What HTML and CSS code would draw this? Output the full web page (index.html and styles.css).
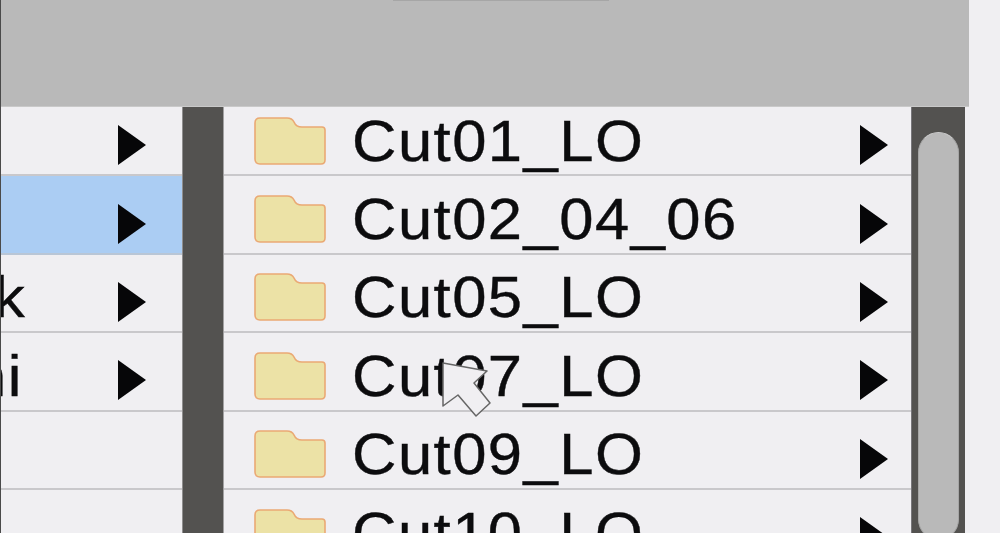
FILE: index.html
```html
<!DOCTYPE html>
<html lang="en">
<head>
<meta charset="utf-8">
<title>Folder browser</title>
<link rel="stylesheet" href="styles.css">
</head>
<body>
<svg width="0" height="0" class="defs" aria-hidden="true">
  <symbol id="folder" viewBox="0 0 72 48">
    <path d="M1 6 Q1 1 6 1 H33 Q38 1 40 5 Q42 10 48 10 H68 Q71 10 71 13 V43 Q71 47 67 47 H6 Q1 47 1 42 Z" fill="#ece2a6" stroke="#eaa974" stroke-width="1.6"/>
  </symbol>
  <symbol id="arrow" viewBox="0 0 30 42">
    <path d="M1 1 L29 21 L1 41 Z" fill="#060608"/>
  </symbol>
</svg>
<div class="app">
  <header class="top"><span class="handle"></span></header>
  <main class="panes">
    <section class="list left">
      <div class="row"><svg class="arrow"><use href="#arrow"/></svg></div>
      <div class="row active"><svg class="arrow"><use href="#arrow"/></svg></div>
      <div class="row"><span class="name clip-k">k</span><svg class="arrow"><use href="#arrow"/></svg></div>
      <div class="row"><span class="name clip-hi">hi</span><svg class="arrow"><use href="#arrow"/></svg></div>
      <div class="row"></div>
      <div class="row"></div>
    </section>
    <div class="gutter"></div>
    <section class="list right">
      <div class="row"><svg class="folder"><use href="#folder"/></svg><span class="name">Cut01_LO</span><svg class="arrow"><use href="#arrow"/></svg></div>
      <div class="row"><svg class="folder"><use href="#folder"/></svg><span class="name">Cut02_04_06</span><svg class="arrow"><use href="#arrow"/></svg></div>
      <div class="row"><svg class="folder"><use href="#folder"/></svg><span class="name">Cut05_LO</span><svg class="arrow"><use href="#arrow"/></svg></div>
      <div class="row"><svg class="folder"><use href="#folder"/></svg><span class="name">Cut07_LO</span><svg class="arrow"><use href="#arrow"/></svg></div>
      <div class="row"><svg class="folder"><use href="#folder"/></svg><span class="name">Cut09_LO</span><svg class="arrow"><use href="#arrow"/></svg></div>
      <div class="row"><svg class="folder"><use href="#folder"/></svg><span class="name">Cut10_LO</span><svg class="arrow"><use href="#arrow"/></svg></div>
    </section>
    <div class="scrollbar"><div class="thumb"></div></div>
  </main>
  <svg class="cursor" viewBox="0 0 50 56" aria-hidden="true">
    <path d="M2 2 L46 10 L33 22 L49 42 L35 55 L17 34 L2 45 Z" fill="#f0eff2" stroke="#666" stroke-width="1.5" stroke-linejoin="round"/>
  </svg>
</div>
</body>
</html>
```
FILE: styles.css
```css
* { box-sizing: border-box; }
html, body { margin: 0; height: 100%; overflow: hidden; background: #f0eff2; }
.defs { position: absolute; }
.app { position: relative; width: 1000px; height: 533px; overflow: hidden; border-left: 1px solid #4a4a4a; font-family: "Liberation Sans", Arial, sans-serif; color: #0c0c0e; }
.top { position: relative; z-index: 1; height: 107px; width: 968px; background: #b9b9b9; border-bottom: 1px solid #c9c9c9; display: flex; justify-content: center; }
.handle { width: 216px; height: 1px; background: #a6a6a6; margin-left: 32px; }
.panes { display: flex; width: 964px; height: 426px; }
.list { display: flex; flex-direction: column; margin-top: -9px; }
.left { width: 181px; }
.right { width: 687px; }
.row { flex: none; height: 78.4px; display: flex; align-items: center; border-bottom: 2px solid #c9c8cb; padding-top: 9px; overflow: hidden; }
.row.active { background: #abcdf3; border-bottom-color: #b9c6d6; }
.right .row { padding-left: 30px; }
.gutter { width: 42px; background: #535250; border-left: 1px solid #8f8e8e; border-right: 1px solid #a3a2a3; }
.folder { width: 72px; height: 48px; flex: none; }
.name { margin-left: 26px; padding-top: 1px; font-size: 57px; line-height: 1; letter-spacing: 1.35px; white-space: nowrap; -webkit-text-stroke: 0.4px #0c0c0e; flex: none; transform: scaleX(1.08); transform-origin: left center; }
.name.clip-k { margin-left: -7px; }
.name.clip-hi { margin-left: -29px; }
.arrow { width: 30px; height: 42px; flex: none; margin: 9px 35px 0 auto; }
.right .arrow { margin-right: 22px; }
.scrollbar { width: 54px; background: #535250; padding: 25px 6px 0 6px; border-left: 1px solid #77767a; }
.thumb { height: 408px; border-radius: 21px; background: #b9b9b9; border: 1px solid #a5a5a5; border-top-color: #c9c9c9; }
.cursor { position: absolute; left: 440px; top: 361px; width: 50px; height: 56px; }
```
